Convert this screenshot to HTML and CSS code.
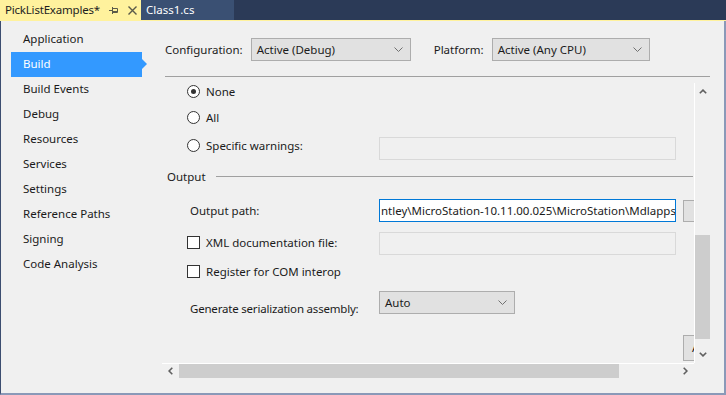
FILE: index.html
```html
<!DOCTYPE html>
<html>
<head>
<meta charset="utf-8">
<title>PickListExamples</title>
<link rel="stylesheet" href="styles.css">
</head>
<body>
<div class="app">
  <div class="tabs">
    <div class="tab tab-active">
      <span class="tab-title">PickListExamples*</span>
      <svg class="tab-pin" width="10" height="9" viewBox="0 0 10 9"><path d="M0 4.5H3.5M3.5 1V8M3.5 2.5H8.5V6.5H3.5M3.5 5.5H8.5" fill="none" stroke="#5a5a4a" stroke-width="1"/></svg>
      <svg class="tab-close" width="9" height="9" viewBox="0 0 9 9"><path d="M0.5 0.5L8.5 8.5M8.5 0.5L0.5 8.5" fill="none" stroke="#5a5a4a" stroke-width="1.4"/></svg>
    </div>
    <div class="tab tab-inactive"><span class="tab-title">Class1.cs</span></div>
  </div>
  <div class="frame">
    <nav class="nav">
      <div class="nav-item">Application</div>
      <div class="nav-item nav-selected">Build</div>
      <div class="nav-item">Build Events</div>
      <div class="nav-item">Debug</div>
      <div class="nav-item">Resources</div>
      <div class="nav-item">Services</div>
      <div class="nav-item">Settings</div>
      <div class="nav-item">Reference Paths</div>
      <div class="nav-item">Signing</div>
      <div class="nav-item">Code Analysis</div>
    </nav>
    <main class="main">
      <div class="config">
        <span class="lbl">Configuration:</span>
        <div class="combo combo-config"><span>Active (Debug)</span><svg class="chev" width="9" height="5" viewBox="0 0 9 5"><path d="M0.5 0.5L4.5 4.5L8.5 0.5" fill="none" stroke="#707070" stroke-width="1"/></svg></div>
        <span class="lbl lbl-platform">Platform:</span>
        <div class="combo combo-platform"><span>Active (Any CPU)</span><svg class="chev" width="9" height="5" viewBox="0 0 9 5"><path d="M0.5 0.5L4.5 4.5L8.5 0.5" fill="none" stroke="#707070" stroke-width="1"/></svg></div>
      </div>
      <div class="scroll">
        <div class="scroll-top">
          <div class="viewport">
            <div class="row row-none">
              <span class="radio radio-checked"></span><span class="opt">None</span>
            </div>
            <div class="row row-all">
              <span class="radio"></span><span class="opt">All</span>
            </div>
            <div class="row row-specific">
              <div class="lcol lcol-top"><span class="radio"></span><span class="opt">Specific warnings:</span></div>
              <div class="textbox textbox-disabled"></div>
            </div>
            <div class="row row-group">
              <span class="group-title">Output</span><span class="group-line"></span>
            </div>
            <div class="row row-path">
              <div class="lcol lcol-label">Output path:</div>
              <div class="textbox textbox-focus">ntley\MicroStation-10.11.00.025\MicroStation\Mdlapps</div>
              <div class="btn btn-browse"></div>
            </div>
            <div class="row row-xml">
              <div class="lcol lcol-check"><span class="check"></span><span class="opt">XML documentation file:</span></div>
              <div class="textbox textbox-disabled"></div>
            </div>
            <div class="row row-com">
              <span class="check"></span><span class="opt">Register for COM interop</span>
            </div>
            <div class="row row-gen">
              <div class="lcol lcol-label lcol-gen">Generate serialization assembly:</div>
              <div class="combo combo-auto"><span>Auto</span><svg class="chev" width="9" height="5" viewBox="0 0 9 5"><path d="M0.5 0.5L4.5 4.5L8.5 0.5" fill="none" stroke="#707070" stroke-width="1"/></svg></div>
            </div>
            <div class="row row-adv">
              <div class="btn btn-adv">Advanced...</div>
            </div>
          </div>
          <div class="vscroll">
            <div class="sb-btn sb-btn-v"><svg width="8" height="5" viewBox="0 0 8 5"><path d="M0.8 4.3L4 1.1L7.2 4.3" fill="none" stroke="#606060" stroke-width="1.6"/></svg></div>
            <div class="vtrack"><div class="vthumb"></div></div>
            <div class="sb-btn sb-btn-v"><svg width="8" height="5" viewBox="0 0 8 5"><path d="M0.8 0.7L4 3.9L7.2 0.7" fill="none" stroke="#606060" stroke-width="1.6"/></svg></div>
          </div>
        </div>
        <div class="scroll-bottom">
          <div class="hscroll">
            <div class="sb-btn sb-btn-h"><svg width="5" height="8" viewBox="0 0 5 8"><path d="M4.3 0.8L1.1 4L4.3 7.2" fill="none" stroke="#606060" stroke-width="1.6"/></svg></div>
            <div class="htrack"><div class="hthumb"></div></div>
            <div class="sb-btn sb-btn-h"><svg width="5" height="8" viewBox="0 0 5 8"><path d="M0.7 0.8L3.9 4L0.7 7.2" fill="none" stroke="#606060" stroke-width="1.6"/></svg></div>
          </div>
          <div class="corner"></div>
        </div>
      </div>
    </main>
  </div>
</div>
</body>
</html>
```
FILE: styles.css
```css
* { box-sizing: border-box; }
html, body { margin: 0; padding: 0; }
body {
  width: 726px;
  height: 395px;
  overflow: hidden;
  background: #f0f0f0;
  font-family: "Noto Sans", "Open Sans", sans-serif;
  font-size: 11.5px;
  color: #1b1b1b;
}
.app { width: 726px; height: 395px; display: flex; flex-direction: column; }

/* tabs */
.tabs {
  height: 21px;
  background: #2b3a57;
  border-bottom: 1px solid #fff29d;
  display: flex;
}
.tab { height: 20px; display: flex; align-items: center; }
.tab-active { width: 141px; background: #fff29d; padding-left: 5px; }
.tab-active .tab-title { color: #1e1e1e; width: 104px; letter-spacing: -0.2px; }
.tab-pin { margin-top: 1px; }
.tab-close { margin-left: 9px; }
.tab-inactive { width: 93px; background: #3a5073; padding-left: 5px; }
.tab-inactive .tab-title { color: #ffffff; }
.tab-title { white-space: nowrap; line-height: 16px; }

/* frame */
.frame {
  flex: 1;
  display: flex;
  border-left: 1px solid #3c4d70;
  border-right: 2px solid #8a99b8;
  border-bottom: 2px solid #8a99b8;
}
.nav { width: 161px; padding-top: 6px; }
.nav-item {
  height: 25px;
  line-height: 23px;
  margin-left: 10px;
  width: 131px;
  padding-left: 12px;
  white-space: nowrap;
}
.nav-selected { background: #3399ff; color: #ffffff; position: relative; }
.nav-selected::after {
  content: "";
  position: absolute;
  right: -5px;
  top: 7px;
  border-left: 5px solid #3399ff;
  border-top: 5px solid transparent;
  border-bottom: 5px solid transparent;
}

/* main */
.main { width: 562px; display: flex; flex-direction: column; padding-right: 14px; }
.config {
  height: 56px;
  margin-left: 3px;
  padding-top: 17px;
  border-bottom: 1px solid #a0a0a0;
  display: flex;
  align-items: flex-start;
}
.lbl { line-height: 23px; white-space: nowrap; }
.combo {
  height: 23px;
  background: #e1e1e1;
  border: 1px solid #adadad;
  display: flex;
  align-items: center;
  justify-content: space-between;
  padding: 0 7px 0 5px;
  white-space: nowrap;
}
.combo-config { width: 160px; margin-left: 8px; }
.lbl-platform { margin-left: 23px; }
.combo-platform { width: 158px; margin-left: 8px; }

.scroll { margin-top: 6px; height: 295px; display: flex; flex-direction: column; }
.scroll-top { height: 280px; display: flex; }
.viewport { width: 532px; height: 280px; overflow: hidden; }
.vscroll {
  width: 16px;
  border-left: 1px solid #ffffff;
  display: flex;
  flex-direction: column;
}
.sb-btn { display: flex; align-items: center; justify-content: center; flex: none; }
.sb-btn-v { height: 17px; }
.vtrack { flex: 1; }
.vthumb { margin-top: 135px; height: 104px; background: #cdcdcd; }
.scroll-bottom { height: 15px; display: flex; }
.hscroll { width: 532px; border-top: 1px solid #ffffff; display: flex; }
.sb-btn-h { width: 17px; }
.htrack { flex: 1; }
.hthumb { width: 440px; height: 14px; background: #cdcdcd; }
.corner { width: 16px; }

/* content rows */
.row { display: flex; align-items: center; white-space: nowrap; }
.row-none { height: 16px; padding-left: 25px; }
.row-all { height: 16px; padding-left: 25px; margin-top: 10px; }
.row-specific { height: 23px; margin-top: 12px; align-items: flex-start; }
.row-group { height: 16px; margin-top: 8px; padding-left: 5px; }
.row-path { height: 23px; margin-top: 15px; }
.row-xml { height: 23px; margin-top: 10px; }
.row-com { height: 16px; margin-top: 8px; padding-left: 25px; }
.row-gen { height: 23px; margin-top: 12px; align-items: flex-start; }
.row-adv { height: 26px; margin-top: 21px; padding-left: 521px; }

.lcol { width: 217px; flex: none; display: flex; align-items: center; height: 16px; }
.lcol-top { padding-left: 25px; }
.lcol-label { padding-left: 28px; }
.lcol-check { padding-left: 25px; margin-bottom: 2px; }
.lcol-gen { margin-top: 9px; letter-spacing: -0.2px; }

.radio {
  width: 13px; height: 13px;
  border: 1px solid #333333;
  border-radius: 50%;
  background: #ffffff;
  flex: none;
  display: flex; align-items: center; justify-content: center;
}
.radio-checked::after {
  content: "";
  width: 5px; height: 5px;
  border-radius: 50%;
  background: #333333;
}
.check {
  width: 13px; height: 13px;
  border: 1px solid #333333;
  background: #ffffff;
  flex: none;
}
.opt { margin-left: 6px; }

.group-title { flex: none; }
.group-line { flex: 1; height: 1px; background: #a0a0a0; margin-left: 10px; margin-right: 1px; }

.textbox {
  width: 297px;
  height: 23px;
  flex: none;
  border: 1px solid #d9d9d9;
  background: #f0f0f0;
}
.textbox-focus {
  border-color: #0078d7;
  background: #ffffff;
  padding-left: 1px;
  line-height: 21px;
  overflow: hidden;
}
.btn {
  flex: none;
  background: #e1e1e1;
  border: 1px solid #adadad;
  white-space: nowrap;
}
.btn-browse { margin-left: 7px; height: 22px; width: 30px; }
.btn-adv { height: 26px; width: 75px; padding-left: 8px; line-height: 24px; }
.combo-auto { width: 136px; }
```
